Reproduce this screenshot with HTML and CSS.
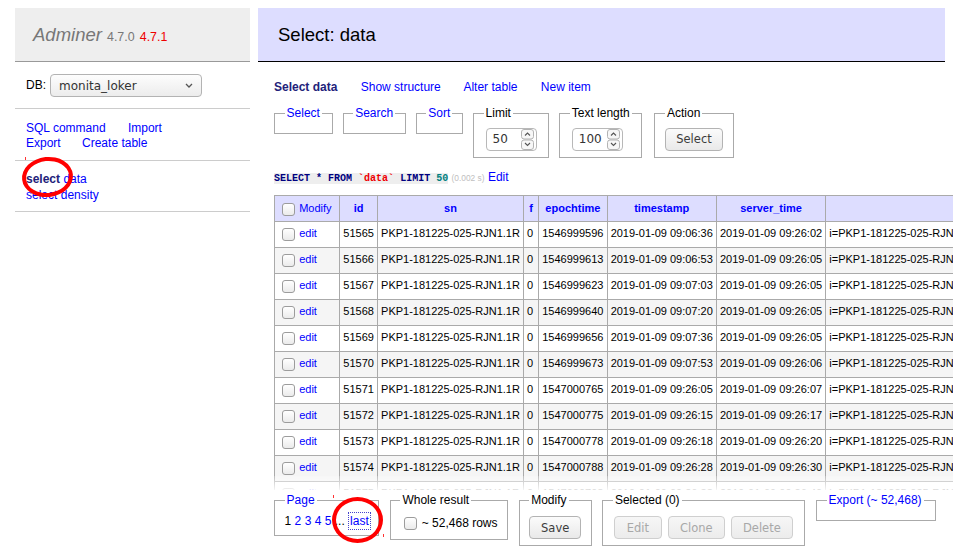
FILE: index.html
```html
<!DOCTYPE html>
<html>
<head>
<meta charset="utf-8">
<title>Select: data - Adminer</title>
<link rel="stylesheet" href="styles.css">
</head>
<body>
<div class="layout">
  <aside class="sidebar">
    <h1 class="brand"><a class="logo" href="#">Adminer</a> <span class="version">4.7.0</span> <a class="newver" href="#">4.7.1</a></h1>
    <div class="dbrow">
      <span>DB:</span>
      <div class="select"><span>monita_loker</span><svg width="8" height="5" viewBox="0 0 8 5"><path d="M1 1l3 3 3-3" fill="none" stroke="#555" stroke-width="1.3"/></svg></div>
    </div>
    <p class="links"><a href="#">SQL command</a> <a href="#">Import</a><br><a href="#">Export</a> <a href="#">Create table</a></p>
    <ul class="tables">
      <li><a class="active" href="#">select</a> <a href="#">data</a></li>
      <li><a href="#">select</a> <a href="#">density</a></li>
    </ul>
  </aside>
  <main class="main">
    <h2 class="title">Select: data</h2>
    <div class="content">
      <p class="nav"><b class="current">Select data</b> <a href="#">Show structure</a> <a href="#">Alter table</a> <a href="#">New item</a></p>
      <div class="controls">
        <fieldset><legend><a href="#">Select</a></legend></fieldset>
        <fieldset><legend><a href="#">Search</a></legend></fieldset>
        <fieldset><legend><a href="#">Sort</a></legend></fieldset>
        <fieldset><legend>Limit</legend>
          <div class="num"><span>50</span><svg class="spin" width="13" height="21" viewBox="0 0 13 21"><rect x=".5" y=".5" width="12" height="9.5" rx="2.5" fill="#f7f7f7" stroke="#b3b3b3"/><rect x=".5" y="11" width="12" height="9.5" rx="2.5" fill="#f7f7f7" stroke="#b3b3b3"/><path d="M4 6.5l2.5-2.5 2.5 2.5" fill="none" stroke="#555" stroke-width="1.1"/><path d="M4 14l2.5 2.5 2.5-2.5" fill="none" stroke="#555" stroke-width="1.1"/></svg></div>
        </fieldset>
        <fieldset><legend>Text length</legend>
          <div class="num"><span>100</span><svg class="spin" width="13" height="21" viewBox="0 0 13 21"><rect x=".5" y=".5" width="12" height="9.5" rx="2.5" fill="#f7f7f7" stroke="#b3b3b3"/><rect x=".5" y="11" width="12" height="9.5" rx="2.5" fill="#f7f7f7" stroke="#b3b3b3"/><path d="M4 6.5l2.5-2.5 2.5 2.5" fill="none" stroke="#555" stroke-width="1.1"/><path d="M4 14l2.5 2.5 2.5-2.5" fill="none" stroke="#555" stroke-width="1.1"/></svg></div>
        </fieldset>
        <fieldset class="action"><legend>Action</legend>
          <span class="btn w-select">Select</span>
        </fieldset>
      </div>
      <p class="query"><code><span class="kw">SELECT</span> <span class="kw">*</span> <span class="kw">FROM</span> <span class="bac">`data`</span> <span class="kw">LIMIT</span> <span class="jn">50</span></code> <span class="time">(0.002 s)</span> <a href="#">Edit</a></p>
      <div class="grid-wrap">
        <table class="grid">
          <thead>
            <tr><th class="first"><span class="cb"></span> <a href="#">Modify</a></th><th><a href="#">id</a></th><th><a href="#">sn</a></th><th class="fcol"><a href="#">f</a></th><th><a href="#">epochtime</a></th><th><a href="#">timestamp</a></th><th><a href="#">server_time</a></th><th class="wide"></th></tr>
          </thead>
          <tbody>
            <tr><td><span class="cb"></span> <a href="#">edit</a></td><td>51565</td><td>PKP1-181225-025-RJN1.1R</td><td>0</td><td>1546999596</td><td>2019-01-09 09:06:36</td><td>2019-01-09 09:26:02</td><td>i=PKP1-181225-025-RJN1.1R&amp;t=1546999596&amp;v=0</td></tr>
            <tr class="odd"><td><span class="cb"></span> <a href="#">edit</a></td><td>51566</td><td>PKP1-181225-025-RJN1.1R</td><td>0</td><td>1546999613</td><td>2019-01-09 09:06:53</td><td>2019-01-09 09:26:05</td><td>i=PKP1-181225-025-RJN1.1R&amp;t=1546999613&amp;v=0</td></tr>
            <tr><td><span class="cb"></span> <a href="#">edit</a></td><td>51567</td><td>PKP1-181225-025-RJN1.1R</td><td>0</td><td>1546999623</td><td>2019-01-09 09:07:03</td><td>2019-01-09 09:26:05</td><td>i=PKP1-181225-025-RJN1.1R&amp;t=1546999623&amp;v=0</td></tr>
            <tr class="odd"><td><span class="cb"></span> <a href="#">edit</a></td><td>51568</td><td>PKP1-181225-025-RJN1.1R</td><td>0</td><td>1546999640</td><td>2019-01-09 09:07:20</td><td>2019-01-09 09:26:05</td><td>i=PKP1-181225-025-RJN1.1R&amp;t=1546999640&amp;v=0</td></tr>
            <tr><td><span class="cb"></span> <a href="#">edit</a></td><td>51569</td><td>PKP1-181225-025-RJN1.1R</td><td>0</td><td>1546999656</td><td>2019-01-09 09:07:36</td><td>2019-01-09 09:26:05</td><td>i=PKP1-181225-025-RJN1.1R&amp;t=1546999656&amp;v=0</td></tr>
            <tr class="odd"><td><span class="cb"></span> <a href="#">edit</a></td><td>51570</td><td>PKP1-181225-025-RJN1.1R</td><td>0</td><td>1546999673</td><td>2019-01-09 09:07:53</td><td>2019-01-09 09:26:06</td><td>i=PKP1-181225-025-RJN1.1R&amp;t=1546999673&amp;v=0</td></tr>
            <tr><td><span class="cb"></span> <a href="#">edit</a></td><td>51571</td><td>PKP1-181225-025-RJN1.1R</td><td>0</td><td>1547000765</td><td>2019-01-09 09:26:05</td><td>2019-01-09 09:26:07</td><td>i=PKP1-181225-025-RJN1.1R&amp;t=1547000765&amp;v=0</td></tr>
            <tr class="odd"><td><span class="cb"></span> <a href="#">edit</a></td><td>51572</td><td>PKP1-181225-025-RJN1.1R</td><td>0</td><td>1547000775</td><td>2019-01-09 09:26:15</td><td>2019-01-09 09:26:17</td><td>i=PKP1-181225-025-RJN1.1R&amp;t=1547000775&amp;v=0</td></tr>
            <tr><td><span class="cb"></span> <a href="#">edit</a></td><td>51573</td><td>PKP1-181225-025-RJN1.1R</td><td>0</td><td>1547000778</td><td>2019-01-09 09:26:18</td><td>2019-01-09 09:26:20</td><td>i=PKP1-181225-025-RJN1.1R&amp;t=1547000778&amp;v=0</td></tr>
            <tr class="odd"><td><span class="cb"></span> <a href="#">edit</a></td><td>51574</td><td>PKP1-181225-025-RJN1.1R</td><td>0</td><td>1547000788</td><td>2019-01-09 09:26:28</td><td>2019-01-09 09:26:30</td><td>i=PKP1-181225-025-RJN1.1R&amp;t=1547000788&amp;v=0</td></tr>
            <tr><td><span class="cb"></span> <a href="#">edit</a></td><td>51575</td><td>PKP1-181225-025-RJN1.1R</td><td>0</td><td>1547000798</td><td>2019-01-09 09:26:38</td><td>2019-01-09 09:26:40</td><td>i=PKP1-181225-025-RJN1.1R&amp;t=1547000798&amp;v=0</td></tr>
          </tbody>
        </table>
        <div class="fade"></div>
      </div>
      <div class="footer">
        <fieldset class="pages"><legend><a href="#">Page</a></legend>1 <a href="#">2</a> <a href="#">3</a> <a href="#">4</a> <a href="#">5</a> ... <a class="focus" href="#">last</a></fieldset>
        <fieldset><legend>Whole result</legend><span class="cb"></span> ~ 52,468 rows</fieldset>
        <fieldset><legend>Modify</legend><span class="btn w-save">Save</span></fieldset>
        <fieldset class="selected"><legend>Selected (0)</legend><div class="btns"><span class="btn off w-edit">Edit</span><span class="btn off w-clone">Clone</span><span class="btn off w-delete">Delete</span></div></fieldset>
        <fieldset class="export"><legend><a href="#">Export (~ 52,468)</a></legend></fieldset>
      </div>
    </div>
  </main>
</div>
<div class="ring ring-a"></div>
<div class="ring ring-b"></div>
<span class="tick tick-a"></span>
<span class="tick tick-b"></span>
<span class="tick tick-c"></span>
</body>
</html>
```

FILE: styles.css
```css
html, body {
  margin: 0;
  padding: 0;
}
body {
  font: 12px/15px "Liberation Sans", Arial, sans-serif;
  color: #000;
  background: #fff;
  width: 953px;
  height: 560px;
  overflow: hidden;
  position: relative;
}
a {
  color: #0000ff;
  text-decoration: none;
}
.layout {
  display: flex;
  align-items: flex-start;
  padding-top: 8px;
}

/* sidebar */
.sidebar {
  flex: none;
  width: 235px;
  margin-left: 15px;
}
.brand {
  margin: 0;
  height: 53px;
  line-height: 53px;
  background: #eee;
  border-bottom: 1px solid #999;
  padding-left: 18px;
  font-size: 18.5px;
  font-weight: normal;
  white-space: nowrap;
}
.logo {
  color: #777;
  font-style: italic;
}
.version {
  color: #777;
  font-size: 12.4px;
}
.newver {
  color: #e00;
  font-size: 12.4px;
}
.dbrow {
  height: 45px;
  padding: 1px 0 0 11px;
  border-bottom: 1px solid #ccc;
  display: flex;
  align-items: center;
  gap: 4px;
}
.select {
  box-sizing: border-box;
  width: 152px;
  height: 23px;
  border: 1px solid #b3b3b3;
  border-radius: 4px;
  background: linear-gradient(#fdfdfd, #ececec);
  display: flex;
  align-items: center;
  justify-content: space-between;
  padding: 0 8px 0 8px;
  font: 12px "DejaVu Sans", sans-serif;
  color: #333;
}
.links {
  margin: 0;
  padding: 12px 11px 9px;
  border-bottom: 1px solid #ccc;
}
.links a {
  margin-right: 19px;
}
.links a + br + a {
  margin-right: 18px;
}
.tables {
  list-style: none;
  margin: 0;
  padding: 10px 11px 8px;
  line-height: 16px;
  border-bottom: 1px solid #ccc;
}
.tables .active {
  font-weight: bold;
  color: #22227a;
}

/* main */
.main {
  flex: none;
  width: 687px;
  margin-left: 8px;
}
.title {
  margin: 0;
  height: 53px;
  line-height: 53px;
  background: #ddf;
  border-bottom: 1px solid #000;
  padding-left: 20px;
  font-size: 18.5px;
  font-weight: normal;
}
.content {
  padding-left: 16px;
}
.nav {
  margin: 0;
  padding-top: 17.5px;
  white-space: nowrap;
}
.nav .current {
  color: #22227a;
  margin-right: 20px;
}
.nav a {
  margin-right: 20px;
}
.controls {
  display: flex;
  align-items: flex-start;
  gap: 10px;
  margin-top: 11px;
}
fieldset {
  margin: 0;
  padding: 6px 9.6px;
  border: 1px solid #aaa;
  min-width: 0;
  white-space: nowrap;
}
legend {
  padding: 0 2px;
  line-height: 15px;
}
.action {
  margin-left: 2px;
}
.num {
  box-sizing: border-box;
  display: flex;
  align-items: center;
  justify-content: space-between;
  width: 51px;
  height: 23px;
  margin: 1px 2px 0;
  padding: 0 2px 0 6px;
  border: 1px solid #b8b8b8;
  border-radius: 4px;
  background: #fff;
  font: 12px "DejaVu Sans", sans-serif;
  color: #333;
}
.btn {
  box-sizing: border-box;
  display: inline-flex;
  align-items: center;
  justify-content: center;
  height: 23px;
  margin: 1px 0 0;
  padding: 0;
  border: 1px solid #b3b3b3;
  border-radius: 4px;
  background: linear-gradient(#fbfbfb, #e9e9e9);
  font: 11.5px "DejaVu Sans", sans-serif;
  color: #3c3c3c;
  vertical-align: top;
}
.w-select { width: 58px; }
.w-save { width: 52px; margin-top: 2px; }
.w-edit { width: 48px; }
.w-clone { width: 57px; }
.w-delete { width: 62px; }
.btn.off {
  color: #a8a8a8;
  border-color: #cfcfcf;
  background: linear-gradient(#f6f6f6, #ececec);
  margin-top: 2px;
}
.btns {
  display: flex;
  gap: 6px;
  margin-left: 1px;
}

/* query line */
.query {
  margin: 12.5px 0 0;
  white-space: nowrap;
}
.query code {
  font: bold 10px/15px "Liberation Mono", monospace;
  background: #eee;
}
.kw {
  color: #000080;
}
.bac {
  color: #e00;
}
.jn {
  color: #008080;
}
.time {
  color: #c0c0c0;
  font-size: 8.4px;
}

/* data grid */
.grid-wrap {
  position: relative;
  margin-top: 9px;
  width: 720px;
  height: 295px;
  overflow: hidden;
}
.grid {
  border-collapse: separate;
  border-spacing: 0;
  border-top: 1px solid #aaa;
  border-left: 1px solid #aaa;
  font-size: 11px;
  white-space: nowrap;
}
.grid th,
.grid td {
  border-right: 1px solid #aaa;
  border-bottom: 1px solid #aaa;
  padding: 1px 3.1px 3px;
  line-height: 21px;
  text-align: left;
}
.grid th {
  background: #ddf;
  padding: 2px 3.1px;
  text-align: center;
}
.grid th.first {
  text-align: left;
  font-weight: normal;
  min-width: 58px;
}
.grid th.fcol {
  min-width: 8px;
}
.grid th.wide {
  min-width: 200px;
}
.grid tr.odd td {
  background: #f5f5f5;
}
.cb {
  display: inline-block;
  box-sizing: border-box;
  width: 13px;
  height: 13px;
  margin: 3px 1px 3px 4px;
  border: 1px solid #9c9c9c;
  border-radius: 3px;
  background: linear-gradient(#fff, #ebebeb);
  vertical-align: middle;
}
.fade {
  position: absolute;
  left: 0;
  right: 0;
  bottom: 0;
  height: 14px;
  background: linear-gradient(rgba(255, 255, 255, 0.2), rgba(255, 255, 255, 0.88));
}

/* footer */
.footer {
  display: flex;
  align-items: flex-start;
  gap: 10.5px;
  margin-top: 3px;
}
.pages {
  margin-right: 0;
}
.pages .focus {
  outline: 1px dotted #4444cc;
  outline-offset: 1px;
  margin-left: 2px;
}
.selected {
  padding-right: 11.6px;
}
.export {
  padding-right: 11px;
}

/* annotations drawn over the screenshot */
.ring {
  position: absolute;
  box-sizing: border-box;
  border: 4px solid #f00;
  border-radius: 50%;
  pointer-events: none;
}
.ring-a {
  left: 22px;
  top: 157px;
  width: 51px;
  height: 40px;
  transform: rotate(-6deg);
}
.ring-b {
  left: 332px;
  top: 497px;
  width: 51px;
  height: 46px;
}
.tick {
  position: absolute;
  width: 1px;
  height: 3px;
  background: #f33;
}
.tick-a {
  left: 25px;
  top: 157px;
}
.tick-b {
  left: 333px;
  top: 495px;
}
.tick-c {
  left: 383px;
  top: 534px;
}
```
